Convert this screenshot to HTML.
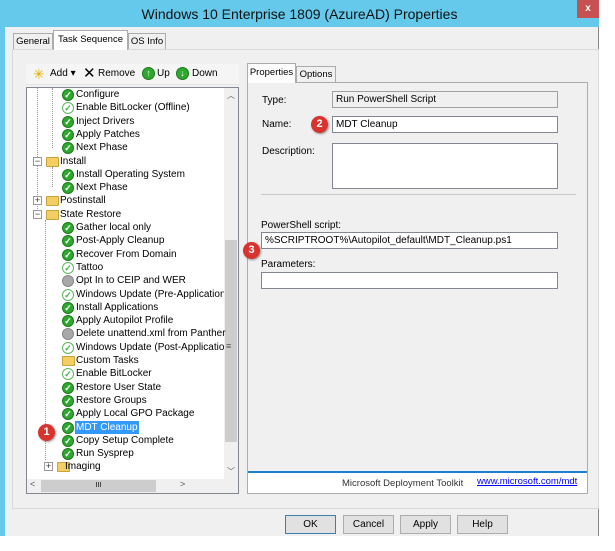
<!DOCTYPE html>
<html><head><meta charset="utf-8"><style>
*{box-sizing:border-box;margin:0;padding:0}
body{width:615px;height:551px;background:#fff;position:relative;overflow:hidden;font-family:"Liberation Sans",sans-serif;font-size:10px;color:#000}
.a{position:absolute}
.win{left:0;top:0;width:599px;height:536px;background:#f0f0f0;border-left:5px solid #65c9eb;border-right:1px solid #888}
.title{left:0;top:0;width:599px;height:27px;background:#65c9eb;font-size:14px;text-align:center;line-height:28px;color:#111}
.close{left:577px;top:0;width:22px;height:18px;background:#c75050;color:#fff;font-weight:bold;font-size:10px;text-align:center;line-height:17px}
.tab{border:1px solid #acacac;border-bottom:none;background:#f0f0f0;text-align:center;line-height:16px;white-space:nowrap;overflow:hidden;font-size:9.5px}
.box{border:1px solid #828790;background:#fff;padding-left:3px;line-height:15px}
.row{position:absolute;height:13.3px;line-height:13.3px;white-space:nowrap}
.ck{position:absolute;width:12px;height:12px;border-radius:50%;background:#2ea82e;color:#fff;font-size:9px;line-height:11px;text-align:center;font-weight:bold;border:1px solid #1b7a1b}
.lt{background:#fff;border:1px solid #5cb85c;color:#4caf50}
.gr{background:#a8a8a8;border:1px solid #888;color:#a8a8a8}
.fd{position:absolute;width:13px;height:10px;background:#f3cf63;border:1px solid #c9a23a;border-radius:1px}
.ex{position:absolute;width:9px;height:9px;border:1px solid #999;background:#fff;font-size:9px;line-height:7px;text-align:center;color:#333}
.badge{position:absolute;width:17px;height:17px;border-radius:50%;background:#d9332f;color:#fff;font-size:11px;font-weight:bold;text-align:center;line-height:17px;box-shadow:1px 1px 2px rgba(0,0,0,.4)}
.btn{position:absolute;top:515px;width:51px;height:19px;border:1px solid #adadad;background:#e1e1e1;text-align:center;line-height:17px}
.vl{position:absolute;border-left:1px dotted #999}
</style></head><body>
<div class="a win"></div>
<div class="a title">Windows 10 Enterprise 1809 (AzureAD) Properties</div>
<div class="a close">x</div>
<div class="a" style="left:12px;top:49px;width:587px;height:460px;border:1px solid #d9d9d9;background:#f0f0f0"></div>
<div class="a tab" style="left:13px;top:33px;width:40px;height:16px">General</div>
<div class="a tab" style="left:53px;top:30px;width:75px;height:20px;background:#fff;line-height:18px">Task Sequence</div>
<div class="a tab" style="left:128px;top:33px;width:38px;height:16px">OS Info</div>
<div class="a" style="left:26px;top:64px;width:213px;height:21px;background:#f5f5f5;border-bottom:1px solid #e5e5e5"></div>
<div class="a" style="left:33px;top:66px;color:#e0b000;font-size:14px;line-height:16px">✳</div>
<div class="a" style="left:50px;top:68px">Add ▾</div>
<div class="a" style="left:83px;top:64px;font-size:15px">✕</div>
<div class="a" style="left:98px;top:68px">Remove</div>
<div class="a ck" style="left:142px;top:67px;width:13px;height:13px;font-size:9px">↑</div>
<div class="a" style="left:157px;top:68px">Up</div>
<div class="a ck" style="left:176px;top:67px;width:13px;height:13px;font-size:9px">↓</div>
<div class="a" style="left:192px;top:68px">Down</div>
<div class="a" style="left:26px;top:87px;width:213px;height:407px;background:#fff;border:1px solid #828790"></div>
<div class="a" style="left:224px;top:88px;width:14px;height:391px;background:#f0f0f0"></div>
<div class="a" style="left:225px;top:240px;width:12px;height:202px;background:#cdcdcd"></div>
<div class="a" style="left:227px;top:90px;font-size:8px;color:#555">︿</div>
<div class="a" style="left:226px;top:341px;font-size:9px;color:#555">≡</div>
<div class="a" style="left:227px;top:466px;font-size:8px;color:#555">﹀</div>
<div class="a" style="left:27px;top:479px;width:211px;height:14px;background:#f0f0f0"></div>
<div class="a" style="left:41px;top:480px;width:115px;height:12px;background:#cdcdcd;text-align:center;font-size:7px;line-height:12px">III</div>
<div class="a" style="left:30px;top:479px;font-size:9px;color:#555">&lt;</div>
<div class="a" style="left:180px;top:479px;font-size:9px;color:#555">&gt;</div>
<div class="vl" style="left:37px;top:88px;height:125px"></div>
<div class="vl" style="left:52px;top:88px;height:60px"></div>
<div class="vl" style="left:52px;top:167px;height:20px"></div>
<div class="vl" style="left:45px;top:220px;height:240px"></div>
<div class="row" style="left:62px;top:88px"><span class="ck" style="left:0;top:1px">✓</span><span style="position:absolute;left:14px">Configure</span></div>
<div class="row" style="left:62px;top:101.3px"><span class="ck lt" style="left:0;top:1px">✓</span><span style="position:absolute;left:14px">Enable BitLocker (Offline)</span></div>
<div class="row" style="left:62px;top:114.6px"><span class="ck" style="left:0;top:1px">✓</span><span style="position:absolute;left:14px">Inject Drivers</span></div>
<div class="row" style="left:62px;top:127.9px"><span class="ck" style="left:0;top:1px">✓</span><span style="position:absolute;left:14px">Apply Patches</span></div>
<div class="row" style="left:62px;top:141.2px"><span class="ck" style="left:0;top:1px">✓</span><span style="position:absolute;left:14px">Next Phase</span></div>
<div class="row" style="left:33px;top:154.5px"><span class="ex" style="left:0;top:2px">−</span><span class="fd" style="left:13px;top:2px"></span><span style="position:absolute;left:27px">Install</span></div>
<div class="row" style="left:62px;top:167.8px"><span class="ck" style="left:0;top:1px">✓</span><span style="position:absolute;left:14px">Install Operating System</span></div>
<div class="row" style="left:62px;top:181.1px"><span class="ck" style="left:0;top:1px">✓</span><span style="position:absolute;left:14px">Next Phase</span></div>
<div class="row" style="left:33px;top:194.4px"><span class="ex" style="left:0;top:2px">+</span><span class="fd" style="left:13px;top:2px"></span><span style="position:absolute;left:27px">Postinstall</span></div>
<div class="row" style="left:33px;top:207.7px"><span class="ex" style="left:0;top:2px">−</span><span class="fd" style="left:13px;top:2px"></span><span style="position:absolute;left:27px">State Restore</span></div>
<div class="row" style="left:62px;top:221px"><span class="ck" style="left:0;top:1px">✓</span><span style="position:absolute;left:14px">Gather local only</span></div>
<div class="row" style="left:62px;top:234.3px"><span class="ck" style="left:0;top:1px">✓</span><span style="position:absolute;left:14px">Post-Apply Cleanup</span></div>
<div class="row" style="left:62px;top:247.6px"><span class="ck" style="left:0;top:1px">✓</span><span style="position:absolute;left:14px">Recover From Domain</span></div>
<div class="row" style="left:62px;top:260.9px"><span class="ck lt" style="left:0;top:1px">✓</span><span style="position:absolute;left:14px">Tattoo</span></div>
<div class="row" style="left:62px;top:274.2px"><span class="ck gr" style="left:0;top:1px">✓</span><span style="position:absolute;left:14px">Opt In to CEIP and WER</span></div>
<div class="row" style="left:62px;top:287.5px;width:162px;overflow:hidden"><span class="ck lt" style="left:0;top:1px">✓</span><span style="position:absolute;left:14px">Windows Update (Pre-Application Installation)</span></div>
<div class="row" style="left:62px;top:300.8px"><span class="ck" style="left:0;top:1px">✓</span><span style="position:absolute;left:14px">Install Applications</span></div>
<div class="row" style="left:62px;top:314.1px"><span class="ck" style="left:0;top:1px">✓</span><span style="position:absolute;left:14px">Apply Autopilot Profile</span></div>
<div class="row" style="left:62px;top:327.4px"><span class="ck gr" style="left:0;top:1px">✓</span><span style="position:absolute;left:14px">Delete unattend.xml from Panther</span></div>
<div class="row" style="left:62px;top:340.7px;width:162px;overflow:hidden"><span class="ck lt" style="left:0;top:1px">✓</span><span style="position:absolute;left:14px">Windows Update (Post-Application Installation)</span></div>
<div class="row" style="left:62px;top:354px"><span class="fd" style="left:0;top:2px"></span><span style="position:absolute;left:14px">Custom Tasks</span></div>
<div class="row" style="left:62px;top:367.3px"><span class="ck lt" style="left:0;top:1px">✓</span><span style="position:absolute;left:14px">Enable BitLocker</span></div>
<div class="row" style="left:62px;top:380.6px"><span class="ck" style="left:0;top:1px">✓</span><span style="position:absolute;left:14px">Restore User State</span></div>
<div class="row" style="left:62px;top:393.9px"><span class="ck" style="left:0;top:1px">✓</span><span style="position:absolute;left:14px">Restore Groups</span></div>
<div class="row" style="left:62px;top:407.2px"><span class="ck" style="left:0;top:1px">✓</span><span style="position:absolute;left:14px">Apply Local GPO Package</span></div>
<div class="row" style="left:62px;top:420.5px"><span class="ck" style="left:0;top:1px">✓</span><span style="position:absolute;left:13px;background:#3399ff;color:#fff;padding:0 1px">MDT Cleanup</span></div>
<div class="row" style="left:62px;top:433.8px"><span class="ck" style="left:0;top:1px">✓</span><span style="position:absolute;left:14px">Copy Setup Complete</span></div>
<div class="row" style="left:62px;top:447.1px"><span class="ck" style="left:0;top:1px">✓</span><span style="position:absolute;left:14px">Run Sysprep</span></div>
<div class="row" style="left:44px;top:460.4px"><span class="ex" style="left:0;top:2px">+</span><span class="fd" style="left:13px;top:2px"></span><span style="position:absolute;left:21px">Imaging</span></div>
<div class="badge" style="left:38px;top:424px">1</div>
<div class="a" style="left:247px;top:82px;width:341px;height:412px;border:1px solid #acacac;background:#f0f0f0"></div>
<div class="a tab" style="left:247px;top:63px;width:49px;height:20px;background:#fff;line-height:18px">Properties</div>
<div class="a tab" style="left:296px;top:66px;width:40px;height:16px">Options</div>
<div class="a" style="left:262px;top:95px">Type:</div>
<div class="a box" style="left:332px;top:91px;width:226px;height:17px;background:#f0f0f0;border-color:#a0a0a0">Run PowerShell Script</div>
<div class="a" style="left:262px;top:119px">Name:</div>
<div class="a box" style="left:332px;top:116px;width:226px;height:17px">MDT Cleanup</div>
<div class="a" style="left:262px;top:146px">Description:</div>
<div class="a box" style="left:332px;top:143px;width:226px;height:46px"></div>
<div class="a" style="left:261px;top:194px;width:315px;height:1px;background:#c8c8c8"></div>
<div class="a" style="left:261px;top:220px">PowerShell script:</div>
<div class="a box" style="left:261px;top:232px;width:297px;height:17px">%SCRIPTROOT%\Autopilot_default\MDT_Cleanup.ps1</div>
<div class="a" style="left:261px;top:259px">Parameters:</div>
<div class="a box" style="left:261px;top:272px;width:297px;height:17px"></div>
<div class="badge" style="left:311px;top:116px">2</div>
<div class="badge" style="left:243px;top:242px">3</div>
<div class="a" style="left:248px;top:471px;width:339px;height:22px;background:#fff;border-top:2px solid #1e7fcc"></div>
<div class="a" style="left:342px;top:478px;color:#333;font-size:9.5px">Microsoft Deployment Toolkit</div>
<div class="a" style="left:477px;top:476px;color:#00f;text-decoration:underline;font-size:9.5px">www.microsoft.com/mdt</div>
<div class="btn" style="left:285px;border-color:#3c7fb1">OK</div>
<div class="btn" style="left:343px">Cancel</div>
<div class="btn" style="left:400px">Apply</div>
<div class="btn" style="left:457px">Help</div>
</body></html>
